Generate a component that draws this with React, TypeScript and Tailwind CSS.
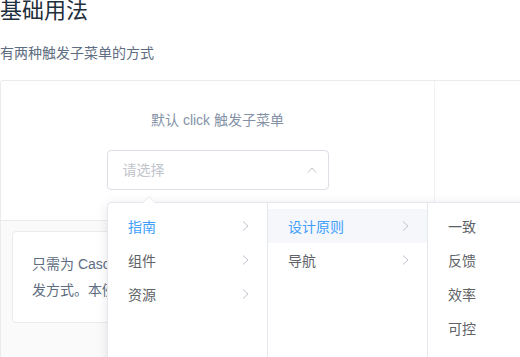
const menu1 = ['指南', '组件', '资源'];
const menu2 = ['设计原则', '导航'];
const menu3 = ['一致', '反馈', '效率', '可控'];

function Arrow() {
  return (
    <svg width="7" height="11" viewBox="0 0 7 11" className="absolute right-[18px] top-1/2 -translate-y-1/2">
      <polyline points="1,1 6,5.5 1,10" fill="none" stroke="#c0c4cc" strokeWidth="1" />
    </svg>
  );
}

export default function App() {
  return (
    <div className="relative w-[520px] h-[357px] overflow-hidden bg-white font-['Liberation_Sans','Noto_Sans_CJK_SC',sans-serif]">
      <h3 className="-mt-[1px] text-[22px] leading-[24px] text-[#1f2f3d] font-normal whitespace-nowrap">基础用法</h3>
      <p className="mt-[19px] text-[14px] leading-[22px] text-[#5e6d82]">有两种触发子菜单的方式</p>

      {/* demo block */}
      <div className="mt-[16px] w-[868px] border border-[#ebebeb] rounded-[3px]">
        <div className="flex">
          <div className="w-[434px] border-r border-[#eff2f6] pt-[28px] pb-[30px] text-center">
            <span className="block text-[14px] leading-[22px] text-[#8492a6] mb-[19px]">默认 click 触发子菜单</span>
            <div className="mx-auto w-[222px] h-[40px] border border-[#dcdfe6] rounded-[4px] flex items-center justify-between pl-[15px] pr-[11px]">
              <span className="text-[14px] text-[#c0c4cc]">请选择</span>
              <svg width="10" height="6" viewBox="0 0 10 6">
                <polyline points="1,5.5 5,1 9,5.5" fill="none" stroke="#c0c4cc" strokeWidth="1" />
              </svg>
            </div>
          </div>
          <div className="flex-1" />
        </div>
        <div className="border-t border-[#ebebeb] bg-[#fafafa] pt-[10px] pl-[11px] pr-[11px] h-[140px]">
          <div className="bg-white border border-[#ebebeb] rounded-[4px] px-[19px] py-[19px] text-[14px] leading-[26px] text-[#5e6d82] overflow-hidden">
            <div className="whitespace-nowrap">只需为 Cascader 的 options 属性指定选项数组即可渲染出一个级联选择器。通过 props.expandTrigger 可以定义展开子级菜单的触</div>
            <div className="whitespace-nowrap">发方式。本例还展示了 change 事件，它的回调参数为 Cascader 的绑定值：一个由各级菜单的值所组成的数组。</div>
          </div>
        </div>
      </div>

      {/* cascader dropdown */}
      <div className="absolute left-[107px] top-[202px] bg-white border border-[#e4e7ed] rounded-[4px] shadow-[0_2px_12px_0_rgba(0,0,0,0.1)] flex">
        <div className="absolute left-[35px] -top-[7px] w-0 h-0 border-x-[6px] border-x-transparent border-b-[6px] border-b-[#e4e7ed]" />
        <div className="absolute left-[35px] -top-[6px] w-0 h-0 border-x-[6px] border-x-transparent border-b-[6px] border-b-white" />
        <div className="w-[160px] h-[204px] border-r border-[#e4e7ed] py-[6px]">
          {menu1.map((t, i) => (
            <div key={t} className={`relative h-[34px] flex items-center pl-[20px] pt-[2px] text-[14px] ${i === 0 ? 'text-[#409eff]' : 'text-[#606266]'}`}>
              {t}
              <Arrow />
            </div>
          ))}
        </div>
        <div className="w-[160px] h-[204px] border-r border-[#e4e7ed] py-[6px]">
          {menu2.map((t, i) => (
            <div key={t} className={`relative h-[34px] flex items-center pl-[20px] pt-[2px] text-[14px] ${i === 0 ? 'text-[#409eff] bg-[#f5f7fa]' : 'text-[#606266]'}`}>
              {t}
              <Arrow />
            </div>
          ))}
        </div>
        <div className="w-[160px] h-[204px] py-[6px]">
          {menu3.map((t) => (
            <div key={t} className="relative h-[34px] flex items-center pl-[20px] pt-[2px] text-[14px] text-[#606266]">
              {t}
            </div>
          ))}
        </div>
      </div>
    </div>
  );
}
